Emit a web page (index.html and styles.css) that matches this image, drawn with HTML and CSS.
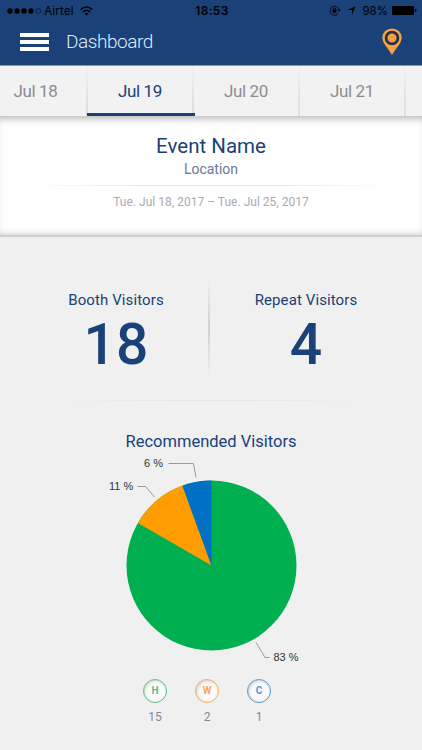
FILE: index.html
```html
<!DOCTYPE html>
<html lang="en">
<head>
    <meta charset="UTF-8">
    <meta name="viewport" content="width=device-width, initial-scale=1.0">
    <title>Dashboard</title>
    <link rel="stylesheet" href="styles.css">
</head>
<body>
    <header class="header">
        <div class="status-bar">
            <div class="carrier">
                <svg width="35" height="8" viewBox="0 0 35 8">
                    <circle cx="3" cy="4" r="2.7"/>
                    <circle cx="10" cy="4" r="2.7"/>
                    <circle cx="17" cy="4" r="2.7"/>
                    <circle cx="24" cy="4" r="2.7"/>
                    <circle cx="31.3" cy="4" r="2.4" fill="none" stroke="#000" stroke-width=".5"/>
                </svg>
                <span class="carrier-name">Airtel</span>
                <svg width="13" height="10" viewBox="0 0 13 10" fill="none" stroke="#000" stroke-width="1.6">
                    <path d="M.7 3.7Q6.5-1.7 12.3 3.7M2.8 6Q6.5 2.6 10.2 6"/>
                    <path d="M6.5 9.5L4.5 7.4Q6.5 5.9 8.5 7.4Z" fill="#000" stroke="none"/>
                </svg>
            </div>
            <span class="clock">18:53</span>
            <div class="indicators">
                <svg width="12" height="11" viewBox="0 0 12 11" fill="none" stroke="#000">
                    <path d="M9.2 8.4A4.5 4.5 0 1 1 10 5" stroke-width=".8"/>
                    <path d="M8.5 4.8H11.6L10 6.8Z" fill="#000" stroke="none"/>
                    <path d="M4.3 5V4.2A1.2 1.2 0 0 1 6.7 4.2V5" stroke-width=".9"/>
                    <rect x="3.5" y="4.7" width="4" height="3" fill="#000" stroke="none"/>
                </svg>
                <svg class="arrow" width="9" height="9" viewBox="0 0 9 9"><path d="M8.7.3L5 8.6V4.1H.3Z"/></svg>
                <span class="percent">98%</span>
                <svg width="25" height="9" viewBox="0 0 25 9">
                    <rect width="22" height="9" rx="1"/>
                    <path d="M23 2.7Q24.5 3.2 24.5 4.5T23 6.3Z"/>
                </svg>
            </div>
        </div>
        <div class="nav-bar">
            <div class="menu"><span></span><span></span><span></span></div>
            <h1>Dashboard</h1>
            <svg class="pin" width="20" height="28" viewBox="0 0 20 28">
                <path d="M10 27.3C8.3 22.5.3 15.8.3 9.7A9.7 9.3 0 0 1 19.7 9.7C19.7 15.8 11.7 22.5 10 27.3Z" fill="#f7a040"/>
                <circle cx="10" cy="10" r="5.9" fill="#f7a040" stroke="#25304d" stroke-width="2.7"/>
            </svg>
        </div>
    </header>

    <nav class="tabs">
        <div class="tab">Jul 18</div>
        <div class="tab active">Jul 19</div>
        <div class="tab">Jul 20</div>
        <div class="tab">Jul 21</div>
    </nav>

    <section class="event">
        <h2>Event Name</h2>
        <div class="location">Location</div>
        <div class="line"></div>
        <div class="dates">Tue. Jul 18, 2017 – Tue. Jul 25, 2017</div>
    </section>

    <section class="stats">
        <div class="stat">
            <div class="stat-title">Booth Visitors</div>
            <div class="stat-number">18</div>
        </div>
        <div class="stat-divider"></div>
        <div class="stat">
            <div class="stat-title">Repeat Visitors</div>
            <div class="stat-number">4</div>
        </div>
    </section>
    <div class="line stats-line"></div>

    <section class="recommended">
        <h3>Recommended Visitors</h3>
        <svg class="chart" width="422" height="204" viewBox="0 452 422 204">
            <circle cx="211.5" cy="565.5" r="85" fill="#00b050"/>
            <path d="M211.5 565.5L137.9 523A85 85 0 0 1 182.4 485.6Z" fill="#ff9c00"/>
            <path d="M211.5 565.5L182.4 485.6A85 85 0 0 1 211.5 480.5Z" fill="#0070c6"/>
            <g fill="none" stroke="#999" stroke-width="1">
                <path d="M168.5 463.5H193.5L196 477.5"/>
                <path d="M137.5 486.5H145.5L154.5 497"/>
                <path d="M256 642.5L265 657.5H269.5"/>
            </g>
            <text x="144" y="467">6 %</text>
            <text x="109" y="490.3">11 %</text>
            <text x="273.5" y="661.3">83 %</text>
        </svg>
        <div class="legend">
            <div class="legend-item hot"><span class="badge">H</span>15</div>
            <div class="legend-item warm"><span class="badge">W</span>2</div>
            <div class="legend-item cold"><span class="badge">C</span>1</div>
        </div>
    </section>
</body>
</html>
```

FILE: styles.css
```css
* {
    box-sizing: border-box;
}
body {
    margin: 0;
    width: 422px;
    height: 750px;
    overflow: hidden;
    font-family: Roboto, sans-serif;
    background: #f0f0f0;
    color: #1a4178;
    text-align: center;
}
h1, h2, h3 {
    margin: 0;
    font-weight: 400;
}
.header {
    height: 66px;
    background: #1a4178;
    border-bottom: 1px solid #8795b2;
}
.status-bar {
    display: grid;
    grid-template-columns: 1fr auto 1fr;
    align-items: center;
    height: 21px;
    padding: 0 5px 0 7px;
    color: #000;
    font-family: Inter, sans-serif;
    font-size: 12px;
}
.carrier, .indicators {
    display: flex;
    align-items: center;
}
.carrier-name {
    width: 30px;
    margin: 0 6px 0 2px;
    font-size: 11.5px;
    letter-spacing: 0.2px;
}
.clock {
    font-weight: 600;
    letter-spacing: 0.3px;
}
.indicators {
    justify-content: flex-end;
}
.arrow {
    margin: 0 6px 0 6px;
}
.percent {
    margin-right: 4px;
    font-size: 11.5px;
}
.nav-bar {
    display: flex;
    align-items: center;
    height: 42px;
    padding: 0 20px 0 20px;
}
.menu {
    display: flex;
    flex-direction: column;
    gap: 3px;
    width: 29px;
}
.menu span {
    height: 4px;
    background: #fff;
}
.nav-bar h1 {
    margin: 0 auto 2px 17px;
    color: #dfecff;
    font-size: 19px;
    font-weight: 300;
    letter-spacing: -0.45px;
}
.tabs {
    display: flex;
    height: 50px;
    background: #f2f2f2;
}
.tab {
    position: relative;
    width: 106px;
    padding-top: 14px;
    color: #8b8d91;
    font-size: 17px;
    letter-spacing: -0.4px;
    line-height: 22px;
    border-right: 2px solid;
    border-image: linear-gradient(#f0f0f0, #dcdcdc) 1;
}
.tab:first-child {
    width: 88px;
    padding-right: 15px;
}
.tab.active {
    color: #1a4178;
}
/* underline covers the dividers on both sides */
.tab.active::after {
    content: "";
    position: absolute;
    left: -1px;
    right: -3px;
    bottom: 0;
    height: 3px;
    background: #1a4178;
}
.event {
    height: 121px;
    padding-top: 18px;
    background: #fff;
    border-bottom: 2px solid #d0d0d0;
    box-shadow: inset 0 8px 7px -5px #bbb, inset 0 -5px 6px -4px #ccc;
}
.event h2 {
    font-size: 20.5px;
    line-height: 24px;
}
.location {
    margin-top: 3px;
    color: #697894;
    font-size: 14px;
    line-height: 17px;
}
.line {
    width: 370px;
    height: 1px;
    margin: 7px auto 0;
    background: linear-gradient(90deg, transparent, #e6e6ea 35%, #e6e6ea 65%, transparent);
}
.dates {
    margin-top: 8px;
    color: #a9aab2;
    font-size: 12px;
    letter-spacing: 0.02px;
    line-height: 16px;
}
.stats {
    display: flex;
    height: 163px;
    padding: 42px 20px 0 24px;
}
.stat {
    width: 184px;
    padding-top: 12px;
}
.stat:last-child {
    flex: 1;
}
.stat-title {
    font-size: 15px;
    letter-spacing: 0.1px;
    line-height: 18px;
}
.stat-number {
    font-size: 57px;
    font-weight: 500;
    line-height: 72px;
}
.stat-divider {
    width: 2px;
    height: 97px;
    background: linear-gradient(transparent, #d0d0d0 50%, transparent);
}
.stats-line {
    width: 300px;
    margin-top: 0;
    background: linear-gradient(90deg, transparent, #e3e5ec 40%, #e3e5ec 60%, transparent);
}
.recommended {
    padding-top: 31px;
}
.recommended h3 {
    font-size: 16.5px;
    line-height: 20px;
}
.chart {
    display: block;
    overflow: visible;
}
.chart text {
    fill: #333;
    font-family: "Liberation Sans", sans-serif;
    font-size: 11px;
}
.legend {
    display: flex;
    justify-content: center;
    gap: 28px;
    margin-top: 23px;
    padding-right: 8px;
}
.legend-item {
    width: 24px;
    color: #85879b;
    font-size: 12px;
    line-height: 14px;
}
.badge {
    display: block;
    height: 24px;
    margin-bottom: 7px;
    border: 1.5px solid;
    border-radius: 50%;
    background: #fafafa;
    box-shadow: inset 1px 1px 3px #ccc;
    font-size: 10px;
    font-weight: 700;
    line-height: 22px;
}
.hot .badge {
    color: #5cc08a;
}
.warm .badge {
    color: #f8ac4c;
}
.cold .badge {
    color: #5798d2;
}
```
